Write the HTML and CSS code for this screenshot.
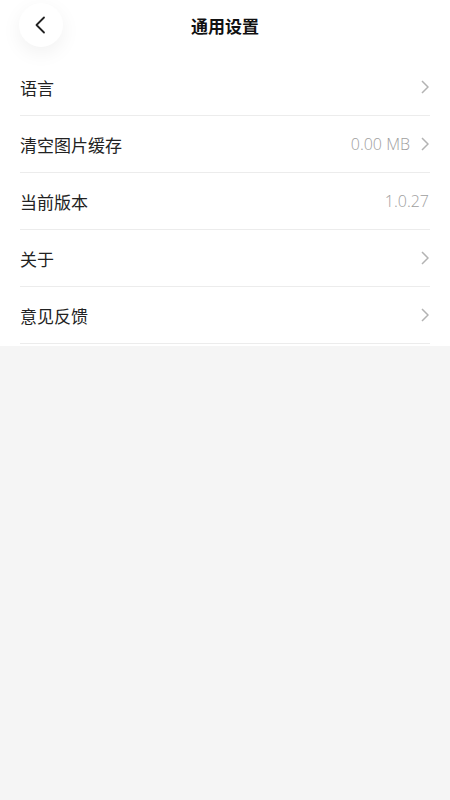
FILE: index.html
```html
<!DOCTYPE html>
<html lang="zh-CN">
<head>
<meta charset="utf-8">
<link rel="stylesheet" href="styles.css">
</head>
<body>
<div class="page">
  <header class="header">
    <div class="back">
      <svg width="12" height="18" viewBox="0 0 12 18"><path d="M10 1.5 L2.5 9 L10 16.5" fill="none" stroke="#222" stroke-width="1.8" stroke-linecap="round" stroke-linejoin="round"/></svg>
    </div>
    <h1 class="title">通用设置</h1>
  </header>
  <ul class="list">
    <li class="row"><span class="label">语言</span><span class="right"><svg class="chev" width="8" height="14" viewBox="0 0 8 14"><path d="M1 1 L7 7 L1 13" fill="none" stroke="#b3b3b3" stroke-width="1.5"/></svg></span></li>
    <li class="row"><span class="label">清空图片缓存</span><span class="right"><span class="value">0.00 MB</span><svg class="chev" width="8" height="14" viewBox="0 0 8 14"><path d="M1 1 L7 7 L1 13" fill="none" stroke="#b3b3b3" stroke-width="1.5"/></svg></span></li>
    <li class="row"><span class="label">当前版本</span><span class="right"><span class="value">1.0.27</span></span></li>
    <li class="row"><span class="label">关于</span><span class="right"><svg class="chev" width="8" height="14" viewBox="0 0 8 14"><path d="M1 1 L7 7 L1 13" fill="none" stroke="#b3b3b3" stroke-width="1.5"/></svg></span></li>
    <li class="row"><span class="label">意见反馈</span><span class="right"><svg class="chev" width="8" height="14" viewBox="0 0 8 14"><path d="M1 1 L7 7 L1 13" fill="none" stroke="#b3b3b3" stroke-width="1.5"/></svg></span></li>
  </ul>
</div>
</body>
</html>
```
FILE: styles.css
```css
html, body {
  margin: 0;
  padding: 0;
  background: #f5f5f5;
  font-family: "Noto Sans CJK SC", "Noto Sans", sans-serif;
}
.page {
  width: 450px;
  min-height: 800px;
  background: #f5f5f5;
}
.header {
  position: relative;
  height: 59px;
  background: #fff;
  display: flex;
  align-items: center;
  justify-content: center;
}
.back {
  position: absolute;
  left: 19px;
  top: 3px;
  width: 44px;
  height: 44px;
  border-radius: 50%;
  background: #fff;
  box-shadow: 0 6px 20px rgba(0,0,0,0.06);
  display: flex;
  align-items: center;
  justify-content: center;
}
.back svg { margin-left: -2px; }
.title {
  margin: 0;
  margin-top: -8px;
  font-size: 17px;
  font-weight: 700;
  color: #111;
}
.list {
  list-style: none;
  margin: 0;
  padding: 0 20px 2px;
  background: #fff;
}
.row {
  height: 56px;
  border-bottom: 1px solid #ececec;
  display: flex;
  align-items: center;
  justify-content: space-between;
}
.label {
  font-size: 17px;
  color: #222;
  margin-top: 1px;
}
.right {
  display: flex;
  align-items: center;
  gap: 10px;
}
.value {
  font-size: 16px;
  color: #9e9e9e;
  font-family: "Open Sans", "Noto Sans", sans-serif;
  font-weight: 300;
  margin-right: 1px;
}
.chev { margin-right: 1px; }
```
